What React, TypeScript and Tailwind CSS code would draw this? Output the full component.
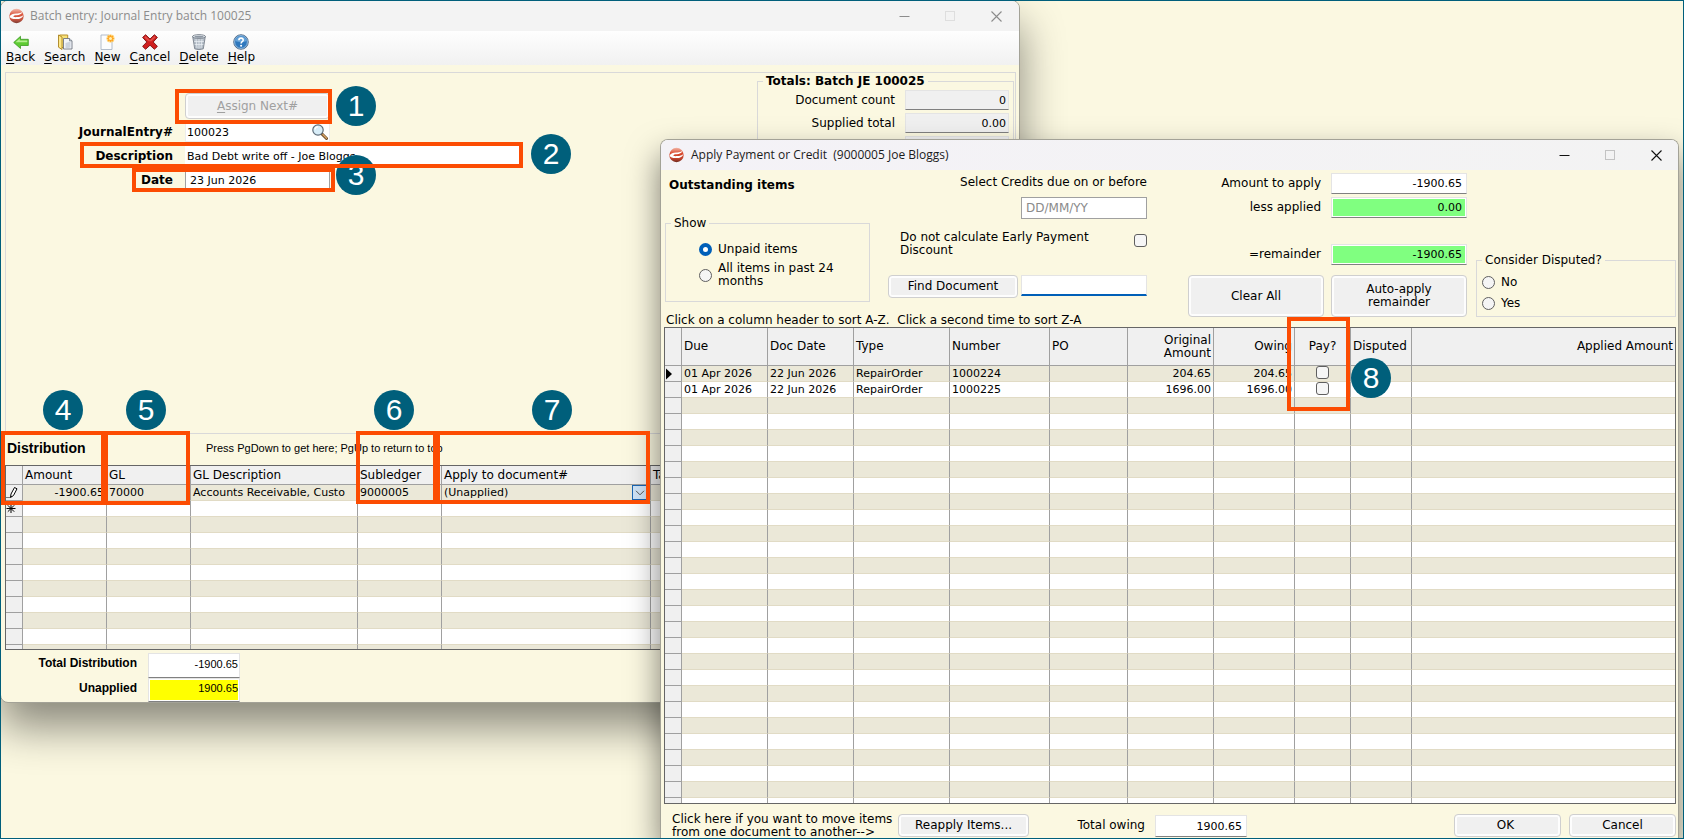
import React from 'react';
import clsx from 'clsx';

const SANS = 'font-["DejaVu_Sans",Verdana,sans-serif]';
const ARIAL = 'font-["Liberation_Sans",Arial,sans-serif]';
const FIELD = 'border border-[#e4e4e4] border-b-[#808080] px-1 text-[11px] outline-none';
const BUTTON =
  'rounded-[4px] border border-[#cfcfcf] bg-[#f0f0f0] shadow-[inset_0_0_0_2px_#fdfdfd] leading-[13px]';
const RADIO =
  'size-[13px] shrink-0 appearance-none rounded-full border border-[#5f5f5f] bg-[#f5f5f5] checked:border-4 checked:border-[#005fb8] checked:bg-white';
const CHECK = 'size-[13px] shrink-0 appearance-none rounded-[3px] border border-[#5f5f5f] bg-[#f6f6f6]';

function AppLogo({ id, faded }: { id: string; faded?: boolean }) {
  return (
    <svg viewBox="0 0 15 16" className={clsx('h-4 w-[15px] shrink-0', faded && 'opacity-90')} aria-hidden="true">
      <defs>
        <linearGradient id={id} x1="0" y1="0" x2="0" y2="1">
          <stop offset="0" stopColor="#f3b5a5" />
          <stop offset="0.4" stopColor="#d9482c" />
          <stop offset="0.75" stopColor="#c0422c" />
          <stop offset="1" stopColor="#6f2a20" />
        </linearGradient>
      </defs>
      <circle cx="7.5" cy="8" r="7.2" fill={`url(#${id})`} />
      <path d="M0.6 8.600C1.600 6 4.400 5.300 7.600 5.400c2.400.1 4.400-.3 5.600-1.300-.5 2.200-2.700 3-5.500 3.100-2 .1-3.300.4-3.300 1.100 0 .8 1.600 1 3.800.8 2.600-.2 4.800-.8 6.100-2.200-.4 2.700-3.300 4.100-6.800 4.200-3.600.1-6.300-.5-6.900-2.500z" fill="#fff" />
    </svg>
  );
}

function WindowControls({ active }: { active?: boolean }) {
  const main = active ? '#111' : '#8c8c8c';
  return (
    <div className="flex items-center gap-[35px]">
      <button type="button" aria-label="Minimise">
        <svg viewBox="0 0 11 11" className="size-[11px]"><path d="M0.500 5.500h10" stroke={main} /></svg>
      </button>
      <button type="button" aria-label="Maximise" disabled>
        <svg viewBox="0 0 11 11" className="size-[11px]">
          <rect x="0.5" y="0.5" width="9" height="9" fill="none" stroke={active ? '#c3c3c3' : '#dedede'} />
        </svg>
      </button>
      <button type="button" aria-label="Close">
        <svg viewBox="0 0 11 11" className="size-[11px]"><path d="M0.500.5l10 10M10.500.5l-10 10" stroke={main} strokeWidth="1.1" /></svg>
      </button>
    </div>
  );
}

function BackIcon() {
  return (
    <svg viewBox="0 0 16 16" className="size-4">
      <path d="M0.700 8.500L7.500 2.300v3h7.800v6.200H7.500v3z" fill="#5ecb32" stroke="#3c9a23" strokeWidth="0.8" />
      <path d="M2.500 8.300L6.700 4.500v1.900h7.600v1.900z" fill="#b4f08f" />
    </svg>
  );
}

function SearchIcon() {
  return (
    <svg viewBox="0 0 16 16" className="size-4">
      <path d="M2.500 1h8.200v12.500H2.500z" fill="#f7e27a" stroke="#b9902a" />
      <path d="M1.500 1l3.500 2v12.500l-3.500-2.300z" fill="#ffe98a" stroke="#a98220" strokeWidth="0.9" />
      <path d="M6.500 4.500h6l2.500 2.300v8.200H6.500z" fill="#f2f5f9" stroke="#6f7681" strokeWidth="0.9" />
      <path d="M12.500 4.500v2.300H15" fill="#d4dae2" stroke="#6f7681" strokeWidth="0.800" />
      <path d="M8.500 9l5-1.500v6L8.500 14.500z" fill="#cdd4de" />
    </svg>
  );
}

function NewIcon() {
  return (
    <svg viewBox="0 0 16 16" className="size-4">
      <path d="M2 1h8l3 3v11.500H2z" fill="#fbfcfe" stroke="#a9b6c6" strokeWidth="0.900" />
      <circle cx="11.500" cy="4.500" r="4" fill="#ffc94d" opacity="0.75" />
      <path d="M11.500.5l.8 2.100 2.100-1-.9 2.100 2.100.8-2.100.8.9 2.100-2.100-1-.8 2.100-.8-2.100-2.100 1 .9-2.100-2.100-.8 2.100-.8-.9-2.100 2.100 1z" fill="#ff9f1c" />
      <circle cx="11.500" cy="4.500" r="1.500" fill="#fff2b0" />
    </svg>
  );
}

function CancelIcon() {
  return (
    <svg viewBox="0 0 16 16" className="size-4">
      <path d="M3.600.7L8 5l4.400-4.300 3 2.700L11.200 8l4.200 4.400-3 2.900L8 11.200l-4.400 4.100-3-2.900L4.800 8 .6 3.400z" fill="#cf1f1f" stroke="#7d0e10" strokeWidth="0.900" />
      <path d="M3.600 2.100L8 6.200l4.400-4.100 1.200 1.200L9.500 7.200h-3L2.300 3.400z" fill="#ee6a60" opacity="0.600" />
    </svg>
  );
}

function DeleteIcon() {
  return (
    <svg viewBox="0 0 16 16" className="size-4">
      <path d="M1.700 2.500l2 12.300c1.700.9 6.900.9 8.600 0l2-12.300z" fill="#b3bcc6" stroke="#6d7681" strokeWidth="0.800" />
      <path d="M5 5l1 9M8 5v9.500M11 5l-1 9M3.200 7.500h9.600M3.600 10.500h8.800" stroke="#eef2f6" strokeWidth="0.700" />
      <ellipse cx="8" cy="2.500" rx="6.500" ry="1.900" fill="#e2e7ec" stroke="#6d7681" strokeWidth="0.800" />
      <ellipse cx="8" cy="2.700" rx="4.500" ry="1" fill="#8d97a3" />
    </svg>
  );
}

function HelpIcon() {
  return (
    <svg viewBox="0 0 16 16" className="size-4">
      <circle cx="8" cy="8" r="7.300" fill="#2f78bd" stroke="#5b6f86" strokeWidth="0.900" />
      <circle cx="8" cy="8" r="6.400" fill="none" stroke="#b8d6f0" strokeWidth="0.700" />
      <path d="M2.500 7a5.600 5.600 0 0 1 11 0c-3 1.300-8 1.300-11 0z" fill="#7db5e4" opacity="0.700" />
      <path d="M5.900 6.200c.1-2.900 4.500-2.700 4.300 0-.1 1.500-2.100 1.600-2.100 3.300" fill="none" stroke="#fff" strokeWidth="1.600" />
      <circle cx="8.100" cy="11.800" r="1.050" fill="#fff" />
    </svg>
  );
}

function Magnifier() {
  return (
    <svg viewBox="0 0 16 16" className="size-4">
      <path d="M10 10l4.500 4.500" stroke="#6b4a2a" strokeWidth="3" strokeLinecap="round" />
      <path d="M10.800 10.500l3.700 3.700" stroke="#d9a566" strokeWidth="1.300" strokeLinecap="round" />
      <circle cx="6" cy="6" r="5.200" fill="#d8edf8" stroke="#5d6b78" strokeWidth="1.200" />
      <path d="M3 5.500a3 3 0 0 1 3-2.700" fill="none" stroke="#fff" strokeWidth="1.300" />
    </svg>
  );
}

const tools = [
  { label: 'Back', Icon: BackIcon },
  { label: 'Search', Icon: SearchIcon },
  { label: 'New', Icon: NewIcon },
  { label: 'Cancel', Icon: CancelIcon },
  { label: 'Delete', Icon: DeleteIcon },
  { label: 'Help', Icon: HelpIcon },
];

type Column = { title: string; width?: string; align?: string };

const distColumns: Column[] = [
  { title: 'Amount', width: 'w-[84px]' },
  { title: 'GL', width: 'w-[84px]' },
  { title: 'GL Description', width: 'w-[167px]' },
  { title: 'Subledger', width: 'w-[84px]' },
  { title: 'Apply to document#', width: 'w-[209px]' },
  { title: 'Tax' },
];

const itemColumns: Column[] = [
  { title: 'Due', width: 'w-[86px]' },
  { title: 'Doc Date', width: 'w-[86px]' },
  { title: 'Type', width: 'w-[96px]' },
  { title: 'Number', width: 'w-[100px]' },
  { title: 'PO', width: 'w-[78px]' },
  { title: 'Original Amount', width: 'w-[86px]', align: 'text-right' },
  { title: 'Owing', width: 'w-[81px]', align: 'text-right' },
  { title: 'Pay?', width: 'w-[56px]', align: 'text-center' },
  { title: 'Disputed', width: 'w-[61px]' },
  { title: 'Applied Amount', align: 'text-right' },
];

const items = [
  ['01 Apr 2026', '22 Jun 2026', 'RepairOrder', '1000224', '', '204.65', '204.65'],
  ['01 Apr 2026', '22 Jun 2026', 'RepairOrder', '1000225', '', '1696.00', '1696.00'],
];

function ColumnGroup({ columns }: { columns: Column[] }) {
  return (
    <colgroup>
      <col className="w-[17px]" />
      {columns.map((c) => (
        <col key={c.title} className={c.width} />
      ))}
    </colgroup>
  );
}

function HeaderRow({ columns, height }: { columns: Column[]; height: string }) {
  return (
    <thead>
      <tr className={clsx('bg-[#f0f0f0] text-[12px] leading-[13px]', height)}>
        <th className="border-r border-b border-[#a0a0a0] p-0" aria-label="Row marker" />
        {columns.map((c) => (
          <th
            key={c.title}
            className={clsx(
              'overflow-hidden border-r border-b border-[#a0a0a0] px-[2px] py-0 font-normal last:border-r-0',
              c.align ?? 'text-left',
            )}
          >
            {c.title}
          </th>
        ))}
      </tr>
    </thead>
  );
}

const CELL = 'h-4 overflow-hidden whitespace-nowrap border-r border-b border-r-[#a0a0a0] border-b-[#e1dbc5] px-[2px] py-0 align-top last:border-r-0';
const MARKER = 'h-4 border-r border-b border-[#a0a0a0] bg-[#f0f0f0] p-0';

function DistributionTable() {
  return (
    <table className="w-full table-fixed border-separate border-spacing-0">
      <ColumnGroup columns={distColumns} />
      <HeaderRow columns={distColumns} height="h-[19px]" />
      <tbody className="text-[11px] leading-[15px]">
        {Array.from({ length: 11 }, (_, i) => (
          <tr key={i} className="odd:bg-[#ebe8d8] even:bg-white">
            <td className={MARKER}>
              {i === 0 && (
                <svg viewBox="0 0 14 14" className="size-[14px]">
                  <path d="M4.500 11.500l.5-3.500 3.500-6.500 2.500 1.300L7.500 9.500z" fill="#fff" stroke="#000" />
                  <path d="M4.500 11.500l.4-1.800 1.200.6z" fill="#000" />
                  <path d="M0.500 11.500h1M2.500 11.500h1" stroke="#000" />
                </svg>
              )}
              {i === 1 && (
                <svg viewBox="0 0 14 14" className="size-[14px]">
                  <path d="M5 2v9M0.500 6.500h9M1.800 3.300l6.400 6.400M8.200 3.300L1.800 9.700" stroke="#000" />
                </svg>
              )}
            </td>
            <td className={clsx(CELL, 'text-right')}>{i === 0 && '-1900.65'}</td>
            <td className={CELL}>{i === 0 && '70000'}</td>
            <td className={CELL}>{i === 0 && 'Accounts Receivable, Custo'}</td>
            <td className={CELL}>{i === 0 && '9000005'}</td>
            <td className={CELL}>
              {i === 0 && (
                <div className="flex h-[15px] items-center">
                  <span className="flex-1">(Unapplied)</span>
                  <button type="button" aria-label="Choose document" className="flex h-[15px] w-4 items-center justify-center border border-[#1a66b3] bg-[#cfe4f7]">
                    <svg viewBox="0 0 10 6" className="h-[6px] w-[10px]"><path d="M1 .8l4 4 4-4" fill="none" stroke="#555" /></svg>
                  </button>
                </div>
              )}
            </td>
            <td className={CELL} />
          </tr>
        ))}
      </tbody>
    </table>
  );
}

function ItemsTable() {
  return (
    <table className="w-full table-fixed border-separate border-spacing-0">
      <ColumnGroup columns={itemColumns} />
      <HeaderRow columns={itemColumns} height="h-[38px]" />
      <tbody className="text-[11px] leading-[15px]">
        {Array.from({ length: 28 }, (_, i) => (
          <tr key={i} className="odd:bg-[#ebe8d8] even:bg-white">
            <td className={MARKER}>
              {i === 0 && (
                <svg viewBox="0 0 14 14" className="size-[14px]"><path d="M1 1.500v11l6-5.500z" fill="#000" /></svg>
              )}
            </td>
            {itemColumns.map((c, col) => (
              <td key={c.title} className={clsx(CELL, c.align)}>
                {c.title === 'Pay?' && items[i] ? (
                  <input type="checkbox" aria-label={`Pay ${items[i][3]}`} className={clsx(CHECK, 'mx-auto block')} />
                ) : (
                  items[i]?.[col]
                )}
              </td>
            ))}
          </tr>
        ))}
      </tbody>
    </table>
  );
}

function BatchWindow() {
  return (
    <section className="absolute top-0 left-0 flex h-[703px] w-[1020px] flex-col overflow-hidden rounded-lg border border-[#a3a297] bg-[#fbf8e1] shadow-[0_24px_44px_0_rgba(0,0,0,0.45)]">
      <header className="flex h-[30px] shrink-0 items-center bg-[#f3f3f3] pr-[17px] pl-2">
        <AppLogo id="logoBatch" faded />
        <h1 className='ml-[6px] flex-1 font-["Open_Sans",sans-serif] text-[12px] text-[#8c8c8c]'>
          Batch entry: Journal Entry batch 100025
        </h1>
        <WindowControls />
      </header>
      <nav className="flex h-[34px] shrink-0 gap-[9px] bg-gradient-to-b from-[#fefefe] to-[#f1f1f1] pt-[3px] pl-[5px]">
        {tools.map(({ label, Icon }) => (
          <button key={label} type="button" className="flex flex-col items-center text-[12px] leading-[14px]">
            <Icon />
            <span>
              <span className="underline underline-offset-2">{label[0]}</span>
              {label.slice(1)}
            </span>
          </button>
        ))}
      </nav>

      <div className="mt-[7px] mr-[3px] ml-1 flex h-[362px] shrink-0 justify-between border border-[#d9d9d9]">
        <form className="grid auto-rows-min grid-cols-[167px_auto] items-center gap-x-3 gap-y-[3px] pt-5 text-[12px] leading-[14px] font-bold">
          <button
            type="button"
            disabled
            className={clsx(BUTTON, 'col-start-2 h-[26px] w-[145px] font-normal text-[#a0a0a0]')}
          >
            <span className="underline underline-offset-2">A</span>ssign Next#
          </button>
          <label htmlFor="entry" className="text-right">JournalEntry#</label>
          <div className="relative w-[145px]">
            <input id="entry" defaultValue="100023" className="block h-5 w-full border border-[#ececec] bg-white px-px text-[11px] font-normal" />
            <button type="button" aria-label="Find journal entry" className="absolute top-[2px] right-[2px]">
              <Magnifier />
            </button>
          </div>
          <label htmlFor="desc" className="text-right">Description</label>
          <input id="desc" defaultValue="Bad Debt write off - Joe Bloggs" className="h-[22px] w-[336px] bg-white px-[2px] text-[11px] font-normal" />
          <label htmlFor="date" className="text-right">Date</label>
          <input id="date" defaultValue="23 Jun 2026" className="h-5 w-[145px] border-x border-[#a0a0a0] bg-white px-1 text-[11px] font-normal" />
        </form>

        <fieldset className="mt-px mr-px h-[120px] w-[257px] border border-[#d9d9d9] pt-[2px] pr-1 text-[12px]">
          <legend className="ml-[5px] px-[3px] leading-[14px] font-bold">Totals: Batch JE 100025</legend>
          <div className="grid grid-cols-[1fr_104px] items-center gap-x-[10px] gap-y-[3px] text-right">
            <label htmlFor="count">Document count</label>
            <input id="count" readOnly value="0" className={clsx(FIELD, 'h-5 bg-[#f0f0f0] px-[2px] text-right')} />
            <label htmlFor="supplied">Supplied total</label>
            <input id="supplied" readOnly value="0.00" className={clsx(FIELD, 'h-5 bg-[#f0f0f0] px-[2px] text-right')} />
            <input aria-label="Entered total" readOnly value="" className={clsx(FIELD, 'col-start-2 h-5 bg-[#f0f0f0]')} />
          </div>
        </fieldset>
      </div>

      <div className={clsx('flex h-[31px] shrink-0 items-center pb-[3px] pl-[6px]', ARIAL)}>
        <h2 className="w-[199px] text-[14px] font-bold">Distribution</h2>
        <p className="text-[11px]">Press PgDown to get here; PgUp to return to top</p>
      </div>
      <div className="mr-[3px] ml-1 h-[185px] shrink-0 overflow-hidden border border-[#666]">
        <DistributionTable />
      </div>
      <div className={clsx('grid grid-cols-[136px_92px] gap-x-[11px] pt-[3px] text-[12px]', ARIAL)}>
        <label htmlFor="totalDist" className="pt-px text-right font-bold">Total Distribution</label>
        <input id="totalDist" readOnly value="-1900.65" className={clsx(FIELD, 'h-[25px] bg-white px-px pb-1 text-right')} />
        <label htmlFor="unapplied" className="pt-px text-right font-bold">Unapplied</label>
        <input
          id="unapplied"
          readOnly
          value="1900.65"
          className={clsx(FIELD, 'h-6 bg-[#ff0] px-px pb-1 text-right shadow-[inset_0_0_0_1px_#fff]')}
        />
      </div>
    </section>
  );
}

function ApplyDialog() {
  return (
    <section
      role="dialog"
      aria-labelledby="applyTitle"
      className="absolute top-[139px] right-[5px] bottom-0 left-[660px] flex flex-col overflow-hidden rounded-t-lg border border-b-0 border-[#a3a297] bg-[#fbf8e1] shadow-[0_16px_32px_0_rgba(0,0,0,0.5)]"
    >
      <header className="flex h-[30px] shrink-0 items-center bg-[#f3f3f3] bg-gradient-to-r from-[#f4f2f7] to-[#f3f3f3] pr-4 pl-2">
        <AppLogo id="logoApply" />
        <h1 id="applyTitle" className='ml-[7px] flex-1 font-["Open_Sans",sans-serif] text-[12px] whitespace-pre text-[#1b1b1b]'>
          {'Apply Payment or Credit  (9000005 Joe Bloggs)'}
        </h1>
        <WindowControls active />
      </header>

      <div className="flex h-[143px] shrink-0 pr-[2px] pl-1 text-[12px] leading-[13px]">
        <div className="w-[205px] pt-[7px]">
          <h2 className="h-4 pl-1 leading-4 font-bold">Outstanding items</h2>
          <fieldset className="mt-6 h-[85px] border border-[#d9d9d9] pl-[33px]">
            <legend className="-ml-[28px] px-[3px]">Show</legend>
            <label className="flex items-center gap-[6px] pt-[13px]">
              <input type="radio" name="show" defaultChecked className={RADIO} />
              Unpaid items
            </label>
            <label className="mt-[6px] flex items-center gap-[6px]">
              <input type="radio" name="show" className={RADIO} />
              All items in past 24 months
            </label>
          </fieldset>
        </div>

        <div className="ml-[18px] flex w-[259px] flex-col pt-[5px]">
          <label htmlFor="creditsDue" className="text-right leading-[14px]">Select Credits due on or before</label>
          <input
            id="creditsDue"
            placeholder="DD/MM/YY"
            className="mt-2 h-[22px] w-[126px] self-end border border-[#a0a0a0] bg-white px-1 placeholder:text-[#8a8a8a]"
          />
          <label className="mt-3 flex justify-between pl-3">
            <span className="w-[200px]">Do not calculate Early Payment Discount</span>
            <input type="checkbox" className={clsx(CHECK, 'mt-[3px]')} />
          </label>
          <div className="mt-[18px] flex gap-[3px]">
            <button type="button" className={clsx(BUTTON, 'h-[23px] w-[130px]')}>Find Document</button>
            <input
              aria-label="Document to find"
              className="h-[21px] w-[126px] border border-b-2 border-[#e4e4e4] border-b-[#005fb8] bg-white px-1 outline-none"
            />
          </div>
        </div>

        <div className="ml-[41px] w-[279px] pt-[3px]">
          <div className="grid grid-cols-[1fr_136px] items-center gap-x-[10px] text-right">
            <label htmlFor="toApply">Amount to apply</label>
            <input id="toApply" readOnly value="-1900.65" className={clsx(FIELD, 'h-[21px] bg-white text-right')} />
            <label htmlFor="lessApplied" className="mt-[3px]">less applied</label>
            <input id="lessApplied" readOnly value="0.00" className={clsx(FIELD, 'mt-[3px] h-[21px] bg-[#80ff80] text-right shadow-[inset_0_0_0_1px_#fff]')} />
            <label htmlFor="remainder" className="mt-[26px]">=remainder</label>
            <input id="remainder" readOnly value="-1900.65" className={clsx(FIELD, 'mt-[26px] h-[21px] bg-[#80ff80] text-right shadow-[inset_0_0_0_1px_#fff]')} />
          </div>
          <div className="mt-[10px] flex gap-[7px]">
            <button type="button" className={clsx(BUTTON, 'h-[42px] w-[136px]')}>Clear All</button>
            <button type="button" className={clsx(BUTTON, 'h-[42px] w-[136px] px-6')}>Auto-apply remainder</button>
          </div>
        </div>

        <fieldset className="mt-[84px] ml-[9px] h-[63px] min-w-0 flex-1 border border-[#d9d9d9] pl-[5px]">
          <legend className="px-[3px]">Consider Disputed?</legend>
          <label className="mt-[9px] flex items-center gap-[6px]">
            <input type="radio" name="disputed" className={RADIO} />
            No
          </label>
          <label className="mt-2 flex items-center gap-[6px]">
            <input type="radio" name="disputed" className={RADIO} />
            Yes
          </label>
        </fieldset>
      </div>

      <p className="h-[14px] shrink-0 pl-[5px] text-[12px] leading-[14px] whitespace-pre">
        {'Click on a column header to sort A-Z.  Click a second time to sort Z-A'}
      </p>
      <div className="mr-[2px] ml-[3px] min-h-0 flex-1 overflow-hidden border border-[#666]">
        <ItemsTable />
      </div>

      <footer className="flex h-[35px] shrink-0 items-start pt-[9px] pr-[2px] pl-[11px] text-[12px] leading-[13px]">
        <p className="w-[226px]">
          Click here if you want to move items
          <br />
          from one document to another--&gt;
        </p>
        <button type="button" className={clsx(BUTTON, 'mt-px h-[23px] w-[131px]')}>Reapply Items...</button>
        <label htmlFor="owing" className="w-[116px] pt-[6px] text-right">Total owing</label>
        <input id="owing" readOnly value="1900.65" className={clsx(FIELD, 'mt-[2px] ml-[10px] h-[22px] w-[92px] bg-white text-right')} />
        <div className="mt-px ml-auto flex gap-2">
          <button type="button" className={clsx(BUTTON, 'h-[23px] w-[107px] pr-1')}>OK</button>
          <button type="button" className={clsx(BUTTON, 'h-[23px] w-[107px]')}>Cancel</button>
        </div>
      </footer>
    </section>
  );
}

// numbered markers and the frames they refer to, laid over both windows
const markers = [
  'left-[336px] top-[86px]',
  'left-[531px] top-[134px]',
  'left-[336px] top-[155px]',
  'left-[43px] top-[390px]',
  'left-[126px] top-[390px]',
  'left-[374px] top-[390px]',
  'left-[532px] top-[390px]',
  'left-[1351px] top-[358px]',
];

const frames = [
  'left-[175px] top-[89px] h-[35px] w-[157px]',
  'left-[80px] top-[142px] h-[26px] w-[443px]',
  'left-[132px] top-[168px] h-[24px] w-[203px]',
  'left-[1px] top-[431px] h-[74px] w-[107px]',
  'left-[101px] top-[431px] h-[74px] w-[89px]',
  'left-[356px] top-[431px] h-[73px] w-[84px]',
  'left-[433px] top-[431px] h-[73px] w-[217px]',
  'left-[1287px] top-[317px] h-[94px] w-[63px]',
];

export default function App() {
  return (
    <main className={clsx('relative h-screen overflow-hidden bg-[#fbf8e1] text-black', SANS)}>
      <BatchWindow />
      <ApplyDialog />
      {markers.map((place, i) => (
        <span
          key={place}
          className={clsx(
            'absolute flex size-10 items-center justify-center rounded-full bg-[#005f7b] text-[30px] leading-none text-white',
            ARIAL,
            place,
          )}
        >
          {i + 1}
        </span>
      ))}
      {frames.map((place) => (
        <div key={place} className={clsx('pointer-events-none absolute border-4 border-[#fc4c02]', place)} />
      ))}
      <div className="pointer-events-none absolute inset-0 border border-[#005f7b]" />
    </main>
  );
}
